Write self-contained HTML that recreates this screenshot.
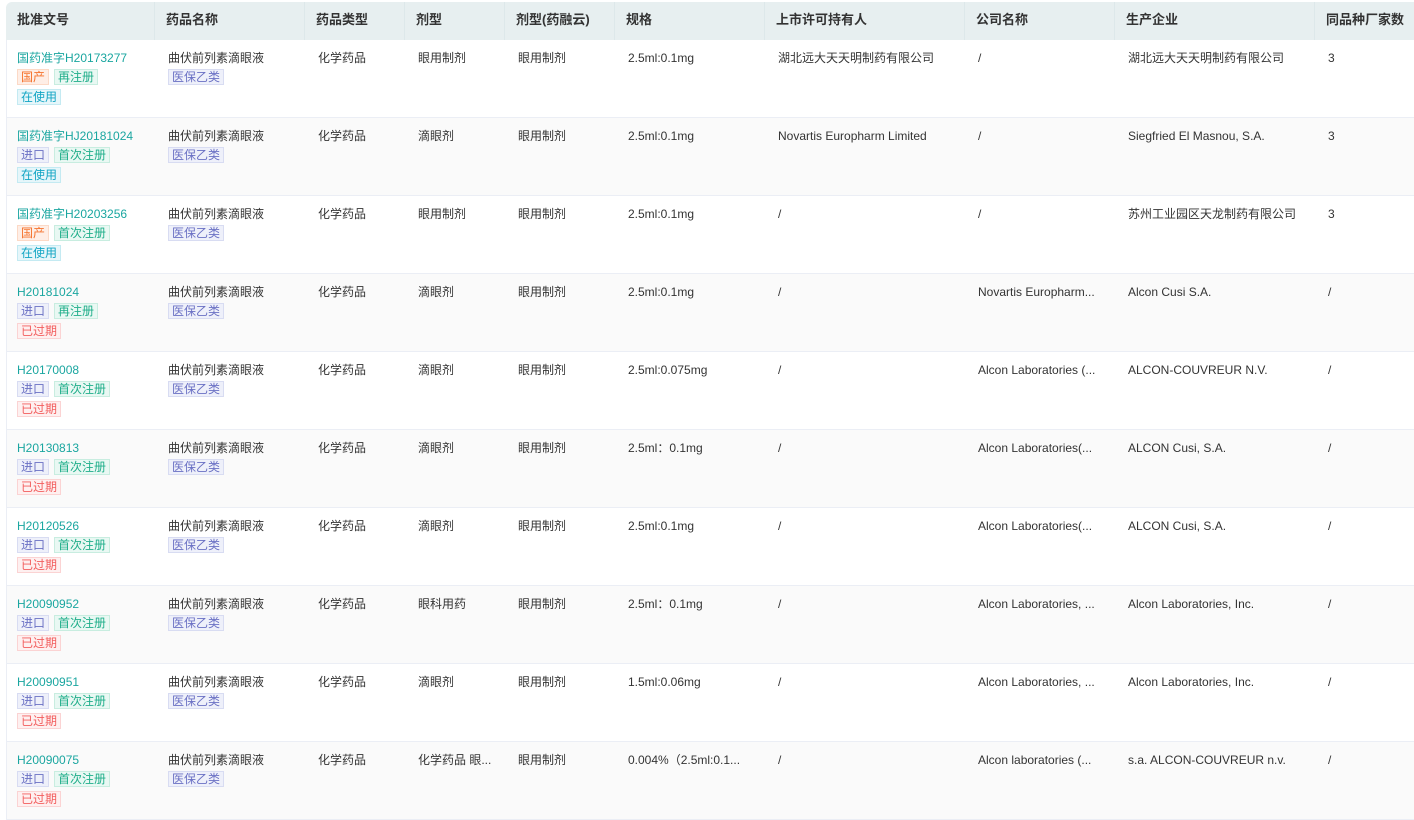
<!DOCTYPE html><html><head><meta charset="utf-8"><style>
*{margin:0;padding:0;box-sizing:border-box}
body{width:1414px;height:813px;overflow:hidden;background:#fff;font-family:"Liberation Sans","Noto Sans CJK SC",sans-serif;font-size:12px;color:#333;position:relative}
.hd{position:absolute;left:6px;top:2px;width:1408px;height:38px;background:#e7eff0;border-radius:6px 0 0 0}
.hc{position:absolute;top:0;height:38px;line-height:36px;font-weight:bold;font-size:13px;color:#333;padding-left:11px;border-right:1px solid #dde8ea}
.row{position:absolute;left:6px;width:1408px;height:78px;border-bottom:1px solid #ebeef5;border-left:1px solid #ebeef5}
.row.g{background:#fafafa}
.c{position:absolute;top:10px;white-space:nowrap;line-height:16px}
.lk{color:#1aa6a0}
.tg{display:inline-block;height:16px;line-height:14px;padding:0 3px;font-size:12px;border:1px solid;margin:2px 5px 2px 0}
.o{color:#f5732d;background:#feeee6;border-color:#fcd9c6}
.gr{color:#1fae8a;background:#e9f8f3;border-color:#c8ede0}
.cy{color:#12a5c4;background:#e6f6fa;border-color:#c4eaf2}
.p{color:#6a70c4;background:#eef0fa;border-color:#d8dcf2}
.r{color:#f25d5d;background:#fef0f0;border-color:#fbd3d3}
</style></head><body>
<div class="hd">
<div class="hc" style="left:0;width:149px">批准文号</div>
<div class="hc" style="left:149px;width:150px">药品名称</div>
<div class="hc" style="left:299px;width:100px">药品类型</div>
<div class="hc" style="left:399px;width:100px">剂型</div>
<div class="hc" style="left:499px;width:110px">剂型(药融云)</div>
<div class="hc" style="left:609px;width:150px">规格</div>
<div class="hc" style="left:759px;width:200px">上市许可持有人</div>
<div class="hc" style="left:959px;width:150px">公司名称</div>
<div class="hc" style="left:1109px;width:200px">生产企业</div>
<div class="hc" style="left:1309px;width:99px;border:none">同品种厂家数</div>
</div>
<div id="rows"></div>
<script>
const D=[
["国药准字H20173277",["o国产","gr再注册"],"cy在使用","眼用制剂","2.5ml:0.1mg","湖北远大天天明制药有限公司","/","湖北远大天天明制药有限公司","3"],
["国药准字HJ20181024",["p进口","gr首次注册"],"cy在使用","滴眼剂","2.5ml:0.1mg","Novartis Europharm Limited","/","Siegfried El Masnou, S.A.","3"],
["国药准字H20203256",["o国产","gr首次注册"],"cy在使用","眼用制剂","2.5ml:0.1mg","/","/","苏州工业园区天龙制药有限公司","3"],
["H20181024",["p进口","gr再注册"],"r已过期","滴眼剂","2.5ml:0.1mg","/","Novartis Europharm...","Alcon Cusi S.A.","/"],
["H20170008",["p进口","gr首次注册"],"r已过期","滴眼剂","2.5ml:0.075mg","/","Alcon Laboratories (...","ALCON-COUVREUR N.V.","/"],
["H20130813",["p进口","gr首次注册"],"r已过期","滴眼剂","2.5ml：0.1mg","/","Alcon Laboratories(...","ALCON Cusi, S.A.","/"],
["H20120526",["p进口","gr首次注册"],"r已过期","滴眼剂","2.5ml:0.1mg","/","Alcon Laboratories(...","ALCON Cusi, S.A.","/"],
["H20090952",["p进口","gr首次注册"],"r已过期","眼科用药","2.5ml：0.1mg","/","Alcon Laboratories, ...","Alcon Laboratories, Inc.","/"],
["H20090951",["p进口","gr首次注册"],"r已过期","滴眼剂","1.5ml:0.06mg","/","Alcon Laboratories, ...","Alcon Laboratories, Inc.","/"],
["H20090075",["p进口","gr首次注册"],"r已过期","化学药品 眼...","0.004%（2.5ml:0.1...","/","Alcon laboratories (...","s.a. ALCON-COUVREUR n.v.","/"]];
function tg(s){let m=s.match(/^([a-z]+)(.*)$/);return `<span class="tg ${m[1]}">${m[2]}</span>`}
let h="";
D.forEach((d,i)=>{
h+=`<div class="row${i%2?' g':''}" style="top:${40+i*78}px">
<div class="c" style="left:10px"><div class="lk">${d[0]}</div><div style="margin-top:1px">${d[1].map(tg).join('')}</div><div>${tg(d[2])}</div></div>
<div class="c" style="left:161px"><div>曲伏前列素滴眼液</div><div style="margin-top:1px">${tg('p医保乙类')}</div></div>
<div class="c" style="left:311px">化学药品</div>
<div class="c" style="left:411px">${d[3]}</div>
<div class="c" style="left:511px">眼用制剂</div>
<div class="c" style="left:621px">${d[4]}</div>
<div class="c" style="left:771px">${d[5]}</div>
<div class="c" style="left:971px">${d[6]}</div>
<div class="c" style="left:1121px">${d[7]}</div>
<div class="c" style="left:1321px">${d[8]}</div></div>`});
document.getElementById('rows').innerHTML=h;
</script>
</body></html>
